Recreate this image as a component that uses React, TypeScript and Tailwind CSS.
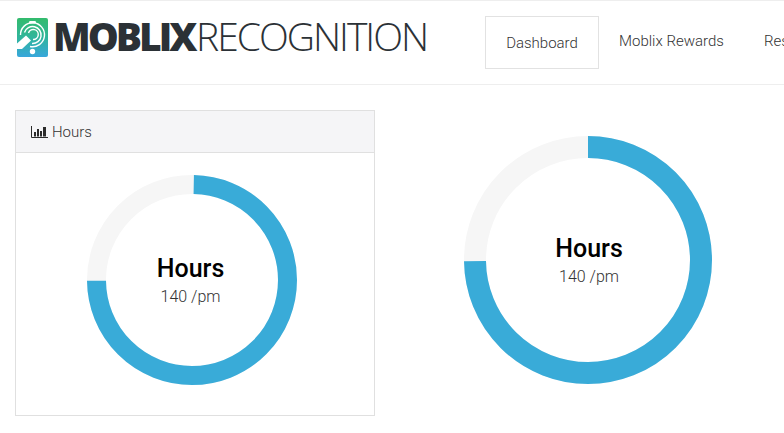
import React from 'react';

function Donut({ size, stroke, title, textClass, start = 0 }: { size: number; stroke: number; title: string; textClass: string; start?: number }) {
    const r = (size - stroke) / 2;
    const c = 2 * Math.PI * r;
    return (
        <div className="relative shrink-0" style={{ width: size, height: size }}>
            <svg width={size} height={size} className="block -rotate-90">
                <circle cx={size / 2} cy={size / 2} r={r} fill="none" stroke="#f6f6f6" strokeWidth={stroke} />
                <circle cx={size / 2} cy={size / 2} r={r} fill="none" stroke="#39abd8" strokeWidth={stroke} strokeDasharray={`${c * (0.7475 - start)} ${c}`} strokeDashoffset={-c * start} />
            </svg>
            <div className={textClass}>
                <div className="text-[25px] leading-[30px] font-medium text-black">{title}</div>
                <div className="text-[16px] leading-[26px] font-light text-[#333]">140 /pm</div>
            </div>
        </div>
    );
}

function LogoIcon() {
    return (
        <svg width="32" height="40" viewBox="0 0 32 40" className="shrink-0">
            <defs>
                <linearGradient id="logoGrad" x1="0" y1="0" x2="0" y2="1">
                    <stop offset="0" stopColor="#33bb6c" />
                    <stop offset="0.5" stopColor="#30b59c" />
                    <stop offset="1" stopColor="#38a7dc" />
                </linearGradient>
            </defs>
            <rect x="0" y="0" width="31" height="39" rx="2" fill="url(#logoGrad)" />
            <rect x="12" y="3" width="7" height="2.4" rx="1.2" fill="#fff" />
            <circle cx="15.5" cy="33.5" r="2.7" fill="#fff" />
            <g fill="none" stroke="#fff" strokeWidth="1.4">
                <path d="M3.5 17a12 12 0 1 1 9.5 11.5" />
                <path d="M7.5 14.5a8.5 8.5 0 1 1 7.5 11" />
                <path d="M11.5 15a5 5 0 1 1 4.5 6.5" />
            </g>
            <path d="M0 25.5 L9 17.5 L14 22.5 L5 31 L0 31 Z" fill="#fff" />
        </svg>
    );
}

export default function App() {
    return (
        <div className="w-[784px] h-[433px] overflow-hidden bg-white font-['Roboto',sans-serif] text-[#333]">
            <header className="h-[85px] border-t border-b border-[#eeeeee] flex items-start">
                <div className="flex items-center pl-[17px] pt-[17px] w-[485px] shrink-0">
                    <LogoIcon />
                    <div className="ml-[4px] -mt-[4px] flex text-[39px] leading-[44px] text-[#2b3136] font-['Open_Sans',sans-serif] whitespace-nowrap">
                        <span className="font-extrabold tracking-[-3px]">MOBLIX</span>
                        <span className="font-light tracking-[-2px] ml-[1.5px]">RECOGNITION</span>
                    </div>
                </div>
                <nav className="flex text-[15px] font-light text-[#333] whitespace-nowrap pt-[15px]">
                    <a className="h-[53px] w-[114px] border border-[#e2e2e2] flex items-center justify-center pt-[1px]">Dashboard</a>
                    <a className="h-[51px] px-[20px] flex items-center">Moblix Rewards</a>
                    <a className="h-[51px] px-[20px] flex items-center">Resources</a>
                </nav>
            </header>
            <main className="flex items-start pl-[15px] pt-[25px]">
                <section className="w-[360px] h-[306px] border border-[#e0e0e0] shrink-0">
                    <div className="h-[42px] bg-[#f5f5f7] border-b border-[#e0e0e0] flex items-center pl-[15px] gap-[4px] text-[15px] font-light">
                        <svg width="17" height="14" viewBox="0 0 17 14" className="shrink-0">
                            <path d="M0.5 1v11.5H17" fill="none" stroke="#2b2b2b" />
                            <path d="M3 7h2v4.5H3zM6 4h2v7.5H6zM9 6h2v5.5H9zM12 2h3v9.5h-3z" fill="#2b2b2b" />
                        </svg>
                        <span className="pt-[1px]">Hours</span>
                    </div>
                    <div className="flex justify-center pt-[22px] pr-[6px]">
                        <Donut size={210} stroke={19} title="Hours" start={0.003} textClass="absolute inset-0 flex flex-col items-center justify-center pr-[3px] pt-[4px]" />
                    </div>
                </section>
                <div className="ml-[89px] mt-[26px]">
                    <Donut size={248} stroke={22} title="Hours" textClass="absolute inset-0 flex flex-col items-center justify-center pl-[2px] pt-[4px]" />
                </div>
            </main>
        </div>
    );
}
